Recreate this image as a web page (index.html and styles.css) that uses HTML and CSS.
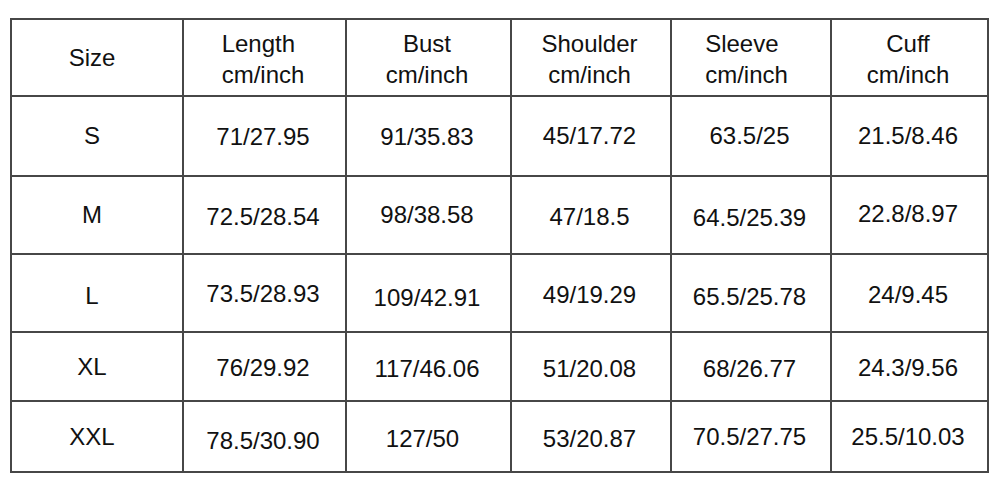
FILE: index.html
```html
<!DOCTYPE html>
<html>
<head>
<meta charset="utf-8">
<link rel="stylesheet" href="styles.css">
</head>
<body>
<div class="sheet">
  <div class="grid">
    <div class="cell first">Size</div>
    <div class="cell hd"><span class="left">Length<br>cm/inch</span></div>
    <div class="cell hd">Bust<br>cm/inch</div>
    <div class="cell hd">Shoulder<br>cm/inch</div>
    <div class="cell hd sleeve"><span class="left">Sleeve<br>cm/inch</span></div>
    <div class="cell hd">Cuff<br>cm/inch</div>

    <div class="cell first">S</div>
    <div class="cell d1">71/27.95</div>
    <div class="cell d1">91/35.83</div>
    <div class="cell">45/17.72</div>
    <div class="cell">63.5/25</div>
    <div class="cell">21.5/8.46</div>

    <div class="cell first">M</div>
    <div class="cell d2">72.5/28.54</div>
    <div class="cell">98/38.58</div>
    <div class="cell d2">47/18.5</div>
    <div class="cell d3">64.5/25.39</div>
    <div class="cell u1">22.8/8.97</div>

    <div class="cell first d3">L</div>
    <div class="cell d1">73.5/28.93</div>
    <div class="cell d5">109/42.91</div>
    <div class="cell d2">49/19.29</div>
    <div class="cell d4">65.5/25.78</div>
    <div class="cell d2">24/9.45</div>

    <div class="cell first">XL</div>
    <div class="cell d1">76/29.92</div>
    <div class="cell d2">117/46.06</div>
    <div class="cell d2">51/20.08</div>
    <div class="cell d2">68/26.77</div>
    <div class="cell d1">24.3/9.56</div>

    <div class="cell first">XXL</div>
    <div class="cell d4">78.5/30.90</div>
    <div class="cell d2 bust127">127/50</div>
    <div class="cell d2">53/20.87</div>
    <div class="cell">70.5/27.75</div>
    <div class="cell">25.5/10.03</div>
  </div>
</div>
</body>
</html>
```

FILE: styles.css
```css
html, body {
  margin: 0;
  padding: 0;
  background: #ffffff;
}

.sheet {
  width: 1000px;
  height: 492px;
  padding: 18px 0 0 10px;
  box-sizing: border-box;
}

.grid {
  display: grid;
  grid-template-columns: 170px 161px 163px 158px 158px 155px;
  grid-template-rows: 75px 78px 76px 76px 67px 69px;
  gap: 2px;
  padding: 2px;
  width: max-content;
  background: #474747;
}

.cell {
  background: #ffffff;
  display: flex;
  align-items: center;
  justify-content: center;
  text-align: center;
  font-family: "Liberation Sans", Arial, sans-serif;
  font-size: 24px;
  line-height: 28px;
  color: #111111;
  padding-right: 3px;
  box-sizing: border-box;
}

.cell.first {
  padding-right: 10px;
}

.cell.hd {
  line-height: 31px;
  padding-top: 2px;
}

.cell.sleeve {
  padding-right: 9px;
}

.left {
  display: inline-block;
  text-align: left;
}

.d1 { padding-top: 2px; }
.d2 { padding-top: 4px; }
.d3 { padding-top: 6px; }
.d4 { padding-top: 8px; }
.d5 { padding-top: 10px; }
.u1 { padding-bottom: 2px; }

.cell.bust127 {
  padding-right: 12px;
}
```
